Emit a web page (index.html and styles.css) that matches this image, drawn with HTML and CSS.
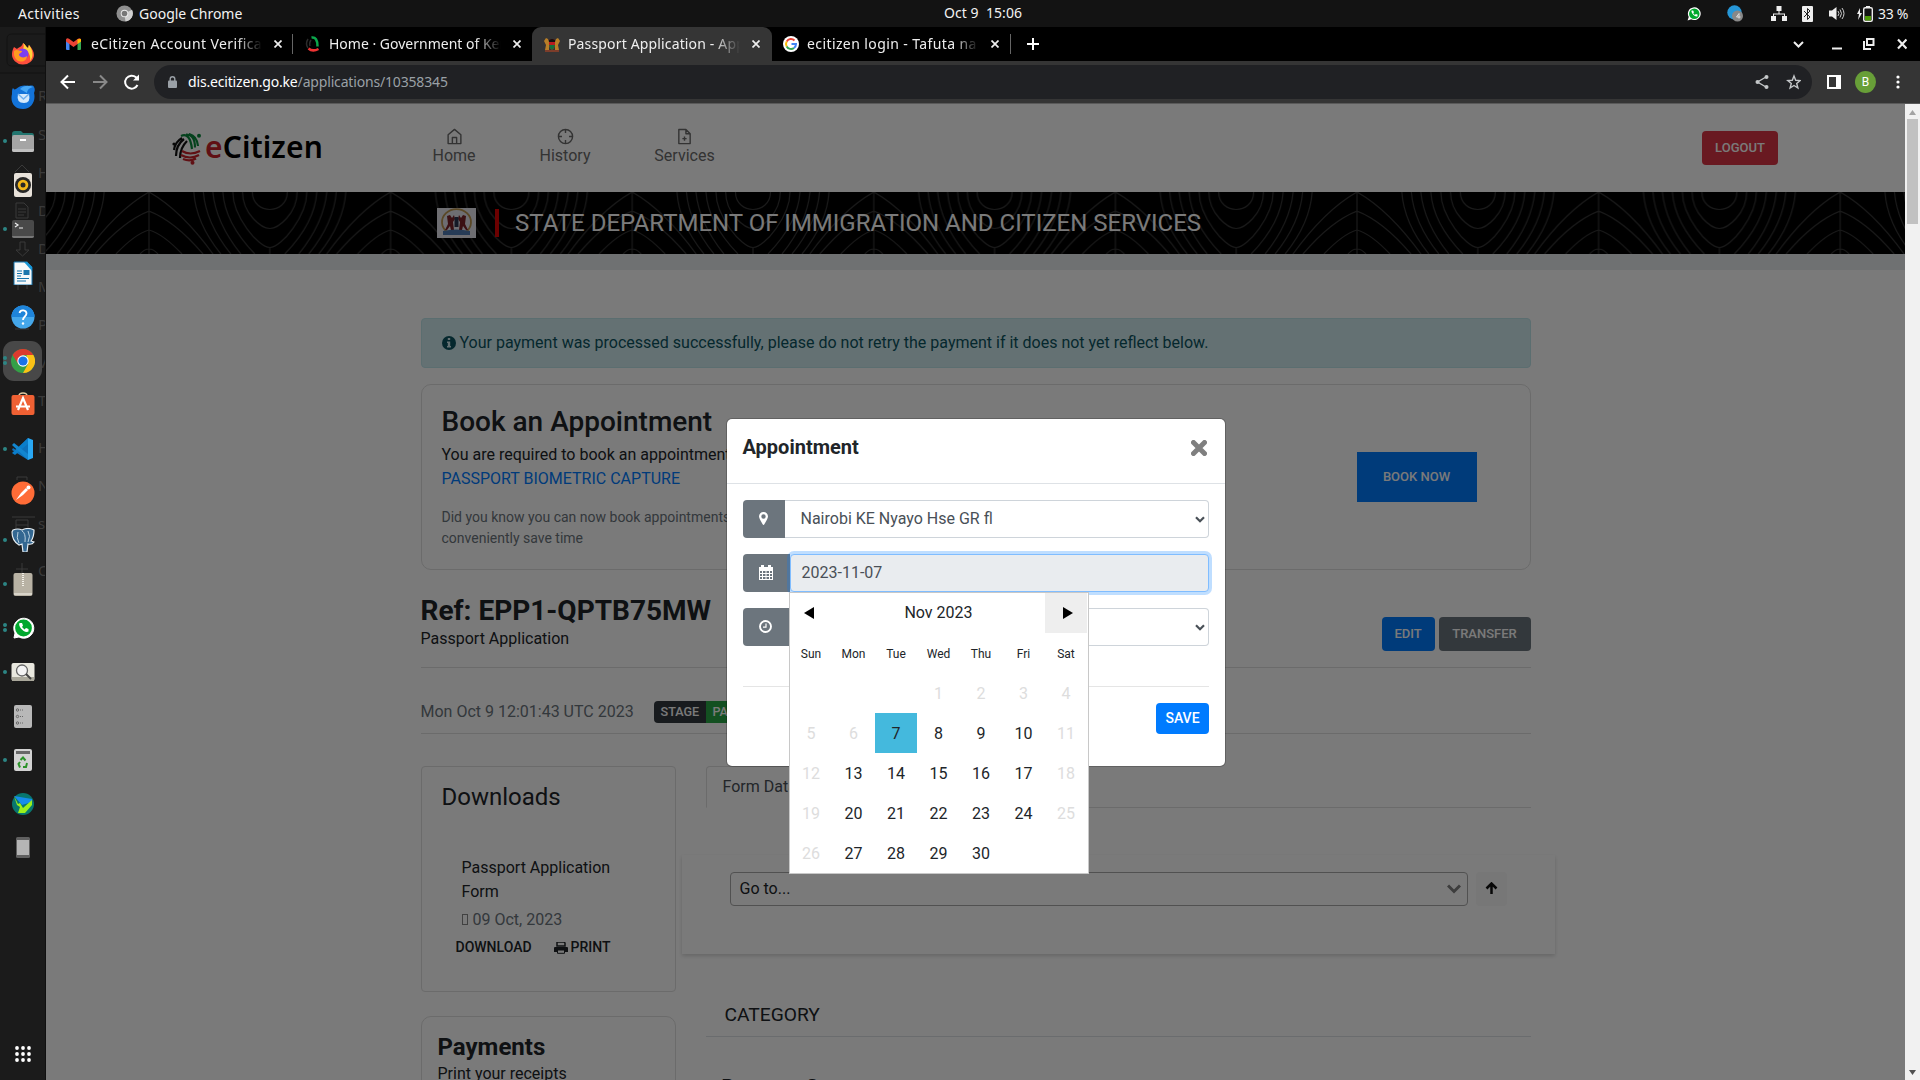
FILE: index.html
```html
<!DOCTYPE html>
<html lang="en">
<head>
<meta charset="utf-8">
<title>Passport Application</title>
<link rel="stylesheet" href="styles.css">
</head>
<body>
<div class="topbar">
  <span class="activities">Activities</span>
  <svg class="app-icon" width="17" height="17" viewBox="0 0 18 18"><circle cx="9" cy="9" r="8.500" fill="#8f8f8f"/><path d="M9 9 17 5a8.500 8.500 0 0 1-7 12.400z" fill="#d0d0d0"/><circle cx="9" cy="9" r="4" fill="#eee"/><circle cx="9" cy="9" r="3" fill="#777"/></svg>
  <span class="app-name">Google Chrome</span>
  <span class="clock">Oct 9&nbsp; 15:06</span>
  <div class="tray">
    <svg width="14" height="14" viewBox="0 0 24 24"><path d="M1 23 3 17a11 11 0 1 1 4 4z" fill="#fff"/><circle cx="12.500" cy="11.500" r="9" fill="#00a82d"/><path d="M8 6c-2 3 5 12 10 10l0-3-3-1-1.500 1.500-3-3L12 9l-1.500-3z" fill="#fff"/></svg>
    <svg class="tray-tg" width="16" height="17" viewBox="0 0 16 17"><circle cx="7.500" cy="7.500" r="7.200" fill="#2697d8"/><circle cx="10.500" cy="11" r="5.500" fill="#888"/><path d="M12 8.500v5M12 8.500l-2.500 3.500h4" stroke="#ddd" fill="none"/></svg>
    <svg class="tray-net" width="16" height="15" viewBox="0 0 16 15"><path d="M5.500 0h5v5h-5zM0 10h5v5H0zM11 10h5v5h-5zM7.500 5h1v3h-1zM2 7.500h12v2.500h-1V8.500H3V10H2z" fill="#eee"/></svg>
    <svg class="tray-bt" width="11" height="16" viewBox="0 0 11 16"><rect width="11" height="16" rx="1" fill="#eee"/><path d="m2 5 6 6-2.500 2.500v-11L8 5l-6 6" fill="none" stroke="#222"/></svg>
    <svg class="tray-vol" width="16" height="15" viewBox="0 0 16 15"><path d="M0 4.500h3L7.500 1v13L3 10.500H0z" fill="#eee"/><path d="M9 5q2 2.500 0 5M11 3.500q3 4 0 8M13 2q4 5.500 0 11" fill="none" stroke="#ccc"/></svg>
    <svg class="tray-bat" width="16" height="16" viewBox="0 0 16 16"><path d="M3 2 0 8h2l-1 6 4-7H3z" fill="#eee"/><rect x="6.700" y="1.700" width="8.600" height="13.600" rx="1.500" fill="none" stroke="#eee" stroke-width="1.400"/><path d="M9 0h4v2H9z" fill="#eee"/><path d="M8 10h6v4.500H8z" fill="#4e9a06"/></svg>
    <span class="battery">33 %</span>
  </div>
</div>
<div class="desktop">
<nav class="dock">
  <div class="ghosts">
    <span style="top:58px">R</span><span style="top:97px">S</span><span style="top:135px">H</span><span style="top:173px">D</span><span style="top:211px">D</span><span style="top:249px">M</span><span style="top:287px">P</span><span style="top:325px">V</span><span style="top:363px">T</span><span style="top:410px">H</span><span style="top:448px">N</span><span style="top:486px">s</span><span style="top:533px">O</span>
    <svg width="46" height="600" viewBox="0 27 46 600" fill="none" stroke="#3a3a3a"><path d="M46 34H12q-5 0-5 5v22q0 5 5 5h34M0 73h46" stroke="#131313"/><path d="M15 172l7-7 7 7M17 203h7l4 4v11H16v-15zM18 209h8M18 212h8M18 215h6M20 242h5v8h4l-6.500 6L16 250h4zM16 262h12M18 290v-7M27 289v-7M15 329h14M12 517h23M16 520h12v15H16zM16 525h12M16 530h12M16 569h12M22 563v12M17 480v-3h10v3"/></svg>
  </div>
  <div class="app"><svg viewBox="0 0 24 24"><path d="M3 6c1 1 2 1 3 2 2-2 5-2 6-6 3 2 3 4 5 5 1-1 0-2 1-3 3 3 5 7 5 10a11 10 0 0 1-22-1c0-3 1-5 2-7z" fill="#ff4f3d"/><path d="M12 2c3 2 3 4 5 5 1-1 0-2 1-3 4 5 5 12 1 16 1-5-1-10-7-12 1-2 1-4 0-6z" fill="#ffd43a"/><circle cx="12" cy="13" r="5.500" fill="#7b3ff2"/><path d="M3 10c3-2 5 0 8 0 0 2-3 2-3 4 1 3 6 3 8 1 0 7-11 8-13-1z" fill="#ff9b20"/></svg></div>
  <div class="app"><svg viewBox="0 0 24 24"><path d="M5 4C9 0 14 0 18 1c3-1 5 0 5 1 1 2 1 3 0 6 2 7-2 16-11 16C3 24-1 17 1 9c0-3 0-5 1-6 1 1 1 2 3 1z" fill="#1373d9"/><path d="M9 4c4-4 9-4 13-2-4 1-6 3-6 6z" fill="#46a7f5"/><path d="M7 9h11q2 9-5 9-8 0-6-9z" fill="#d5e9fb"/><path d="m7 9 5.500 5L18 9" fill="none" stroke="#71b1ee" stroke-width="1.500"/></svg></div>
  <div class="app run"><svg viewBox="0 0 24 24"><path d="M1 5q0-3 3-3h6l2 2h9q2 0 2 3H1z" fill="#22756f"/><rect x="1" y="6" width="22" height="17" rx="2" fill="#a5a5a5"/><path d="M1 20h22v1q0 2-2 2H3q-2 0-2-2z" fill="#c0c0c0"/><path d="M9 10h6v2H9z" fill="#fff"/></svg></div>
  <div class="app"><svg viewBox="0 0 24 24"><rect x="3" y="0" width="18" height="24" rx="2" fill="#e8e2da"/><circle cx="12" cy="12" r="8" fill="#272727"/><circle cx="12" cy="12" r="5.300" fill="#f2b619"/><circle cx="12" cy="12" r="2.500" fill="#272727"/></svg></div>
  <div class="app run"><svg viewBox="0 0 24 24"><rect x="1" y="3" width="22" height="18" rx="2" fill="#494949"/><path d="M1 19h22q0 2-2 2H3q-2 0-2-2z" fill="#777"/><path d="m4 6 3 2-3 2M8 11h4" fill="none" stroke="#eee" stroke-width="1.200"/></svg></div>
  <div class="app"><svg viewBox="0 0 24 24"><path d="M3 1h13l5 5v18H3z" fill="#f6f8f9" stroke="#1473ab"/><path d="M13 1h3l5 5v4z" fill="#1795d4"/><path d="M6 10h5M6 12.500h5M6 15h4M6 17.500h12M6 20h9" stroke="#1473ab"/><path d="M12.500 9h6v5h-6z" fill="#1d77ad"/></svg></div>
  <div class="app"><svg viewBox="0 0 24 24"><circle cx="12" cy="12" r="11.500" fill="#45a7ea"/><path d="M.5 12a11.500 11.500 0 0 1 23 0z" fill="#1e84da"/><path d="M8.500 8c1-4 7-3 7 .5 0 3-3.500 3-3.500 6.500" fill="none" stroke="#fff" stroke-width="1.800"/><circle cx="12" cy="18.500" r="1.200" fill="#fff"/></svg></div>
  <div class="app run2 current"><svg viewBox="0 0 24 24"><circle cx="12" cy="12" r="12" fill="#34a047"/><path d="M1.600 6A12 12 0 0 1 22.400 6H12l-5 8.500z" fill="#dc3a2e"/><path d="M22.400 6a12 12 0 0 1-10.400 18l5-9-1.500-9z" fill="#fbc116"/><circle cx="12" cy="12" r="5.700" fill="#fff"/><circle cx="12" cy="12" r="4.600" fill="#1b73e8"/></svg></div>
  <div class="app software"><svg viewBox="0 0 24 24"><path d="M8 4q0-3 4-3t4 3" fill="none" stroke="#dfc8a0" stroke-width="1.400"/><rect x=".5" y="3" width="23" height="20" rx="2" fill="#ef6033"/><path d="m7 18 5-12 5 12M5 14.500h14" fill="none" stroke="#fff" stroke-width="2.200"/></svg></div>
  <div class="app run"><svg viewBox="0 0 24 24"><path d="m17 1-12 12-3-2-1 2 16 10z" fill="#0d71bb"/><path d="m1 16 3 2L17 7V1z" fill="#0a7dca"/><path d="m17 1 5 2v18l-5 2z" fill="#29a8f4"/><path d="m1 8 2-2 14 11v6z" fill="#1286d0"/></svg></div>
  <div class="app"><svg viewBox="0 0 24 24"><circle cx="12" cy="12" r="11.500" fill="#ff6c37"/><path d="m5 19 5-7 5-5 2 2-5 5z" fill="#fff"/><circle cx="17.500" cy="6.500" r="2" fill="#fff"/></svg></div>
  <div class="app run lower"><svg viewBox="0 0 24 24"><path d="M2 2q5-2 9 0 6-3 12 0 0 7-3 11l3 1q-2 3-6 2l-1 8h-4l-1-8-3 1Q1 13 1 4z" fill="#336791" stroke="#e5edf2" stroke-width="1.200"/><path d="M7 4q-2 6 1 11M11 3q4 2 3 11M17 3q3 5 0 11" fill="none" stroke="#b8d0df"/></svg></div>
  <div class="app run"><svg viewBox="0 0 24 24"><rect x="2.500" y="1" width="19" height="23" rx="2" fill="#b8b2a4"/><path d="M12 1v13" stroke="#f3f0e8" stroke-width="2" stroke-dasharray="1 1"/><path d="M3 22h18" stroke="#d8d4c9" stroke-width="2"/></svg></div>
  <div class="app run2"><svg viewBox="0 0 24 24"><path d="M3 22 4 17a10 10 0 1 1 4 4z" fill="#fff" stroke="#fff"/><circle cx="12.500" cy="12" r="8.400" fill="#00a82d"/><path d="M8.500 7c-2 3 5 11 9 8.500v-2.500l-2.500-1-1.500 1.500-2.500-2.500L12 9.500 11 7z" fill="#fff"/></svg></div>
  <div class="app run"><svg viewBox="0 0 24 24"><rect x=".5" y="3" width="23" height="18" rx="2" fill="#e9e8df"/><path d="M1 17h22v4H1z" fill="#aaa89b"/><circle cx="11" cy="10.500" r="5.500" fill="#f4f4f4" stroke="#666" stroke-width="1.300"/><path d="m15 14 5 5" stroke="#444" stroke-width="2"/></svg></div>
  <div class="app"><svg viewBox="0 0 24 24"><rect x="3" y="1" width="18" height="23" rx="2" fill="#b8b8b8"/><g fill="none" stroke="#666"><circle cx="6.500" cy="6" r="1.200"/><circle cx="6.500" cy="12.500" r="1.200"/><circle cx="6.500" cy="19" r="1.200"/><path d="M9 6h4M9 12.500h4M9 19h4" stroke-dasharray="1 1"/></g></svg></div>
  <div class="app run"><svg viewBox="0 0 24 24"><rect x="3" y="1" width="18" height="22" rx="2" fill="#d3d3d3"/><path d="M5 3h14v3H5z" fill="#686868"/><path d="m9.500 12 2.500-2.500 2.500 3M16 15l-1 4h-3M9 19.500 7.500 16l1.500-2" fill="none" stroke="#2b9329" stroke-width="2"/></svg></div>
  <div class="app"><svg viewBox="0 0 24 24"><circle cx="12" cy="12" r="11" fill="#08776f"/><path d="m3 4 18 3v3l-10 3z" fill="#168dec"/><path d="m3 4 4 8 2-1 3 5 9-8v5l-7 8H7l2-6-3-2z" fill="#9bf01c"/></svg></div>
  <div class="app"><svg viewBox="0 0 24 24"><rect x="5" y="1" width="14" height="21" rx="1.500" fill="#606060"/><path d="M6 4h12v15H6z" fill="#b5b5b5"/></svg></div>
  <div class="app grid-btn"><svg viewBox="0 0 24 24" fill="#fff"><circle cx="6" cy="6" r="1.900"/><circle cx="12" cy="6" r="1.900"/><circle cx="18" cy="6" r="1.900"/><circle cx="6" cy="12" r="1.900"/><circle cx="12" cy="12" r="1.900"/><circle cx="18" cy="12" r="1.900"/><circle cx="6" cy="18" r="1.900"/><circle cx="12" cy="18" r="1.900"/><circle cx="18" cy="18" r="1.900"/></svg></div>
</nav>
<div class="browser">
  <div class="tabs">
    <div class="tab t1"><svg width="15" height="12" viewBox="0 0 15 12"><path d="M0 1.500 3.500 4v8H1q-1 0-1-1z" fill="#4285f4"/><path d="M15 1.500 11.500 4v8H14q1 0 1-1z" fill="#34a853"/><path d="M0 1.500Q1-.5 3 .8L7.500 4 12 .8q2-1.300 3 .7V3.500L7.500 9 0 3.500z" fill="#ea4335"/><path d="M11.500 1.200 15 1v2.500l-3.500 2.600z" fill="#fbbc04"/></svg><span class="title">eCitizen Account Verification</span><svg class="x" width="8" height="8" viewBox="0 0 8 8"><path d="m.5.5 7 7m0-7-7 7"/></svg></div>
    <div class="tab t2"><svg width="16" height="16" viewBox="0 0 16 16" fill="none"><path d="M6.500 1.500q6-1 6 9" stroke="#0ba64b" stroke-width="2.500"/><path d="M3 3q-3 5 0 9M6 4q-2 3-1 6" stroke="#2c2c2c" stroke-width="1.500"/><path d="M3.500 12.500q4 3.500 10 .5" stroke="#e33" stroke-width="2.500"/></svg><span class="title">Home · Government of Kenya</span><svg class="x" width="8" height="8" viewBox="0 0 8 8"><path d="m.5.5 7 7m0-7-7 7"/></svg></div>
    <div class="tab t3 active"><svg width="16" height="15" viewBox="0 0 16 15"><path d="m0 4 2-3 2 1 1 3v8H1l1-5zM16 4l-2-3-2 1-1 3v8h4l-1-5z" fill="#b87e27"/><path d="M5 3q3-2 6 0v6q-1 3-3 4-2-1-3-4z" fill="#b71b20"/><path d="M5 3q3-2 6 0v2H5z" fill="#111"/><path d="M5 8h6q0 3-3 5-3-2-3-5z" fill="#11713a"/><path d="M1 13h14v2H1z" fill="#7c3d2a"/></svg><span class="title">Passport Application - Appointment</span><svg class="x" width="8" height="8" viewBox="0 0 8 8"><path d="m.5.5 7 7m0-7-7 7"/></svg></div>
    <div class="tab t4"><svg width="16" height="16" viewBox="0 0 16 16"><circle cx="8" cy="8" r="8" fill="#fff"/><g fill="none" stroke-width="2"><path d="M11.500 4.500A5 5 0 0 0 3.700 5.500" stroke="#ea4335"/><path d="M3.700 5.500a5 5 0 0 0 0 5" stroke="#fbbc05"/><path d="M3.700 10.500A5 5 0 0 0 11 12" stroke="#34a853"/><path d="M11 12q2-1.500 2-4H8.500" stroke="#4285f4"/></g></svg><span class="title">ecitizen login - Tafuta na Google</span><svg class="x" width="8" height="8" viewBox="0 0 8 8"><path d="m.5.5 7 7m0-7-7 7"/></svg></div>
    <svg class="plus" width="12" height="12" viewBox="0 0 12 12"><path d="M6 0v12M0 6h12" stroke="#fff" stroke-width="2"/></svg>
    <svg class="win" width="114" height="14" viewBox="0 0 114 14" fill="none" stroke="#eee"><path d="m1 5 4.500 4.500L10 5" stroke-width="2"/><path d="M39 11.500h10" stroke-width="2"/><path d="M74 2h6.500v6H74z" stroke-width="2"/><path d="M71 4v8h7" stroke-width="2"/><path d="m105 2.500 8.500 9m0-9-8.500 9" stroke-width="2.200"/></svg>
  </div>
  <div class="toolbar">
    <svg class="navs" width="80" height="18" viewBox="0 0 80 18" fill="none" stroke-width="2"><path d="M15 9H1.500M8 2.500 1.500 9 8 15.500" stroke="#fff"/><path d="M33 9h13.500M40 2.500 46.500 9 40 15.500" stroke="#898989"/><path d="M77.500 12A6.500 6.500 0 1 1 76 4.300L78 6.500" stroke="#fff"/><path d="M79 1.500v6h-6z" fill="#fff" stroke="none"/></svg>
    <div class="omnibox">
      <svg class="lock" width="9" height="12" viewBox="0 0 9 12"><rect y="4.500" width="9" height="7.500" rx="1" fill="#9aa0a6"/><path d="M2.200 5V3q0-2.200 2.300-2.200T6.800 3v2" fill="none" stroke="#9aa0a6" stroke-width="1.400"/></svg>
      <span class="url"><b>dis.ecitizen.go.ke</b>/applications/10358345</span>
      <svg class="omni-icons" width="46" height="16" viewBox="0 0 46 16" fill="none" stroke="#c4c7c9"><path d="M11 3 2.500 8l8.500 5" stroke-width="1.400"/><g fill="#c4c7c9" stroke="none"><circle cx="11.500" cy="3" r="2"/><circle cx="2.500" cy="8" r="2"/><circle cx="11.500" cy="13" r="2"/></g><path d="m39 2 1.700 4.300 4.500.3-3.500 2.900 1.200 4.500-3.900-2.500-3.900 2.500 1.200-4.500-3.500-2.900 4.500-.3z" stroke-width="1.400"/></svg>
    </div>
    <svg class="side" width="14" height="14" viewBox="0 0 14 14"><path d="M1 1h12v12H1z" fill="none" stroke="#fff" stroke-width="2"/><path d="M9 1h4v12H9z" fill="#fff"/></svg>
    <span class="avatar">B</span>
    <svg class="dots" width="4" height="14" viewBox="0 0 4 14" fill="#fff"><circle cx="2" cy="2" r="1.600"/><circle cx="2" cy="7" r="1.600"/><circle cx="2" cy="12" r="1.600"/></svg>
  </div>
  <div class="viewport">
    <main class="page">
      <header class="site-head">
        <div class="logo"><svg width="30" height="32" viewBox="0 0 30 32" fill="none"><path d="M9 3q9-4 11 13M14 1.500q9 0 9 13M17 1q8 2 9 12" stroke="#0b8a3e" stroke-width="2.200"/><path d="M12 6Q4 12 4 23M15 8Q8 15 8 25M10 5q-7 4-8 12" stroke="#111" stroke-width="2.200"/><path d="M10 18q8 5 18 0M9 22q9 5 18 0M11 26q7 3 13-.5" stroke="#c8222a" stroke-width="2.200"/><circle cx="2" cy="11" r="1.600" fill="#111"/><circle cx="27" cy="2.800" r="2" fill="#0b8a3e"/><circle cx="20.500" cy="29.800" r="2" fill="#c8222a"/></svg><span><i>e</i>Citizen</span></div>
        <a class="n1"><svg viewBox="0 0 24 24"><path d="M3 9.500 12 2l9 7.500V22H3zM9 22v-8.500h6V22"/></svg>Home</a>
        <a class="n2"><svg viewBox="0 0 24 24"><circle cx="12" cy="12" r="10"/><path d="M22 12h-5M7 12H2M12 7V2M12 22v-5"/></svg>History</a>
        <a class="n3"><svg viewBox="0 0 24 24"><path d="M14 2H4v20h16V8zM14 2v6h6M12 18v-6M9 15h6"/></svg>Services</a>
        <button class="btn logout">LOGOUT</button>
      </header>
      <div class="banner">
        <svg class="waves" width="1859" height="62"><defs><pattern id="w" x="103" y="0" width="241.600" height="62" patternUnits="userSpaceOnUse"><g fill="none" stroke="#383838" stroke-width="1.200"><g id="peak"><path d="M0 0v62M-64 62Q-32 18 0 0 32 18 64 62M-54 62Q-26 29 0 19 26 29 54 62M-33 62Q-14 42 0 38 14 42 33 62M-9 62Q0 52 9 62"/></g><use href="#peak" x="241.600"/><g transform="translate(120.800)"><path d="M-17.500 0C-17.500 12-8 17.500 0 17.500S17.500 12 17.500 0M-27.300 0C-27.300 22-8 36.500 0 36.500S27.300 22 27.300 0M-37 0C-37 24-12 55 0 55.500 12 55 37 24 37 0M0 55.500V62M-47 0Q-45 31-15 62M47 0Q45 31 15 62M-57 0Q-54 31-29 62M57 0Q54 31 29 62M-66.500 0Q-64 31-39 62M66.500 0Q64 31 39 62M-76 0Q-74 31-49 62M76 0Q74 31 49 62"/></g></g></pattern></defs><rect width="1859" height="62" fill="url(#w)"/></svg>
        <svg class="arms" width="39" height="30" viewBox="0 0 39 30"><path d="M0 0h39v30H0z" fill="#e6e6ee"/><path d="M10 24a14.500 13 0 1 1 19 0" fill="none" stroke="#bd9650" stroke-width="1.800"/><path d="m10 8 3-1 2 3 2-3 1 4-2 3 1 8h-3l-1-4-3 4H8l3-6zM29 8l-3-1-2 3-2-3-1 4 2 3-1 8h3l1-4 3 4h2l-3-6z" fill="#7b2228"/><path d="M17.500 9h4v10h-4z" fill="#2a3550"/><path d="M6 23q13-3 27 0v4H6z" fill="#507cb5"/></svg>
        <span class="redbar"></span>
        <span class="dept">STATE DEPARTMENT OF IMMIGRATION AND CITIZEN SERVICES</span>
      </div>
      <div class="strip"></div>
      <div class="container">
        <div class="alert"><svg width="14" height="14" viewBox="0 0 14 14"><circle cx="7" cy="7" r="7" fill="#0c5460"/><path d="M5.800 2h2.400v2H5.800zM5 5.500h3.200V10H9v1.500H5V10h.8V7H5z" fill="#d1ecf1"/></svg> Your payment was processed successfully, please do not retry the payment if it does not yet reflect below.</div>
        <section class="book">
          <div><h3>Book an Appointment</h3><p>You are required to book an appointment for</p><p class="link">PASSPORT BIOMETRIC CAPTURE</p><p class="hint">Did you know you can now book appointments<br>conveniently save time</p></div>
          <button class="btn booknow">BOOK NOW</button>
        </section>
        <section class="ref">
          <div><h3>Ref: EPP1-QPTB75MW</h3><p>Passport Application</p></div>
          <div class="actions"><button class="btn edit">EDIT</button><button class="btn gray">TRANSFER</button></div>
        </section>
        <section class="stage"><span class="date">Mon Oct 9 12:01:43 UTC 2023</span><span class="badge">STAGE</span><span class="badge green">PAID</span></section>
        <div class="cols">
          <aside>
            <section class="downloads"><h4>Downloads</h4><div class="file">Passport Application<br>Form</div><div class="filedate"><i class="tofu"></i> 09 Oct, 2023</div><div class="links"><span>DOWNLOAD</span><span class="print"><svg width="14" height="12" viewBox="0 0 14 12"><path d="M3 0h7l1 1v3H3z" fill="none" stroke="#212529" stroke-width="1.500"/><path d="M1 5h12q1 0 1 1v4H0V6q0-1 1-1z" fill="#212529"/><path d="M3.500 8h7v3.300h-7z" fill="#fff" stroke="#212529"/></svg>PRINT</span></div></section>
            <section class="payments"><h4>Payments</h4><p>Print your receipts</p></section>
          </aside>
          <div class="detail">
            <div class="formtabs"><span>Form Data</span></div>
            <div class="goto"><div class="select">Go to...<svg width="14" height="10" viewBox="0 0 14 10"><path d="m1 1.500 6 6 6-6" fill="none" stroke="#808080" stroke-width="3"/></svg></div><div class="up"><svg width="13" height="12" viewBox="0 0 13 12"><path d="M6.500 12V2M1.500 6.500l5-5 5 5" fill="none" stroke="#111" stroke-width="2.500"/></svg></div></div>
            <h5>CATEGORY</h5>
            <h4 class="paysum">Payment Summary</h4>
          </div>
        </div>
      </div>
      <div class="backdrop"></div>
    </main>
    <div class="scrollbar"><svg width="7" height="5"><path d="m0 5 3.500-5L7 5z" fill="#a3a3a3"/></svg><i></i><svg class="down" width="7" height="5"><path d="m0 0 3.500 5L7 0z" fill="#505050"/></svg></div>
    <div class="modal">
      <div class="modal-head"><h5>Appointment</h5><svg width="16" height="16" viewBox="0 0 16 16"><path d="m2.500 2.500 11 11m0-11-11 11" stroke="#7f7f7f" stroke-width="5" stroke-linecap="round"/></svg></div>
      <div class="modal-body">
        <div class="group g1"><span class="pre"><svg width="9" height="13" viewBox="0 0 9 13"><path fill-rule="evenodd" d="M4.500 0A4.400 4.400 0 0 1 9 4.400Q9 6 5.500 12q-1 1.800-2 0Q0 6 0 4.400A4.400 4.400 0 0 1 4.500 0zm0 2.300a2.200 2.200 0 1 0 0 4.400 2.200 2.200 0 0 0 0-4.400z" fill="#fff"/></svg></span><span class="field">Nairobi KE Nyayo Hse GR fl<svg width="10" height="7" viewBox="0 0 10 7"><path d="m1 1.200 4 4 4-4" fill="none" stroke="#495057" stroke-width="2.200"/></svg></span></div>
        <div class="group g2"><span class="pre"><svg width="14" height="15" viewBox="0 0 14 15"><path fill-rule="evenodd" d="M0 2h2V0h3v2h4V0h3v2h2v13H0zm1 4v2h2V6zm3 0v2h2.500V6zm3.500 0v2H10V6zM11 6v2h2V6zM1 9v2h2V9zm3 0v2h2.500V9zm3.500 0v2H10V9zM11 9v2h2V9zM1 12v2h2v-2zm3 0v2h2.500v-2zm3.500 0v2H10v-2zm3.500 0v2h2v-2z" fill="#fff"/></svg></span><span class="field focus">2023-11-07</span></div>
        <div class="group g3"><span class="pre"><svg width="13" height="13" viewBox="0 0 13 13" fill="none" stroke="#fff"><circle cx="6.500" cy="6.500" r="5.500" stroke-width="1.900"/><path d="M7 3.500v3.700H4" stroke-width="1.200"/></svg></span><span class="field"><svg width="10" height="7" viewBox="0 0 10 7"><path d="m1 1.200 4 4 4-4" fill="none" stroke="#495057" stroke-width="2.200"/></svg></span></div>
        <div class="modal-foot"><button class="btn save">SAVE</button></div>
      </div>
      <div class="picker">
        <div class="phead"><span><svg width="10" height="12"><path d="M10 0v12L0 6z"/></svg></span><strong>Nov 2023</strong><span class="next"><svg width="10" height="12"><path d="M0 0v12l10-6z"/></svg></span></div>
        <div class="week"><span>Sun</span><span>Mon</span><span>Tue</span><span>Wed</span><span>Thu</span><span>Fri</span><span>Sat</span></div>
        <div class="days"><span></span><span></span><span></span><span class="off">1</span><span class="off">2</span><span class="off">3</span><span class="off">4</span><span class="off">5</span><span class="off">6</span><span class="sel">7</span><span>8</span><span>9</span><span>10</span><span class="off">11</span><span class="off">12</span><span>13</span><span>14</span><span>15</span><span>16</span><span>17</span><span class="off">18</span><span class="off">19</span><span>20</span><span>21</span><span>22</span><span>23</span><span>24</span><span class="off">25</span><span class="off">26</span><span>27</span><span>28</span><span>29</span><span>30</span></div>
      </div>
    </div>
  </div>
</div>
</div>
</body>
</html>
```
FILE: styles.css
```css
* { box-sizing: border-box; }
body { margin: 0; width: 1920px; height: 1080px; overflow: hidden; display: flex; flex-direction: column; background: #000; font: 16px/24px Roboto, sans-serif; color: #212529; }
h3, h4, h5, p { margin: 0; font-weight: 500; }
p { font-weight: 400; }
svg { flex: none; }

/* system bar */
.topbar { height: 27px; background: #131313; display: flex; align-items: center; position: relative; padding: 0 13px 0 18px; font: 14px/27px "Noto Sans", sans-serif; color: #f2f2f2; }
.activities { width: 98px; letter-spacing: .35px; }
.app-name { margin-left: 6px; }
.clock { position: absolute; left: 944px; top: -1px; letter-spacing: .05px; }
.tray { margin-left: auto; display: flex; align-items: center; }
.tray-tg { margin-left: 26px; }
.tray-net { margin-left: 28px; }
.tray-bt { margin-left: 15px; }
.tray-vol { margin-left: 16px; }
.tray-bat { margin-left: 12px; }
.battery { margin-left: 5px; width: 29px; white-space: nowrap; letter-spacing: -.3px; }

/* dock */
.desktop { flex: 1; display: flex; min-height: 0; }
.dock { width: 46px; background: #1b1b1b; border-right: 1px solid #101010; display: flex; flex-direction: column; padding: 4px 0; position: relative; overflow: hidden; }
.ghosts { position: absolute; inset: 0; color: #3a3a3a; font: 15px/20px "Noto Sans", sans-serif; }
.ghosts span { position: absolute; left: 38px; }
.app { height: 44px; flex: none; display: flex; align-items: center; justify-content: center; position: relative; }
.app svg { width: 24px; height: 24px; position: relative; }
.run::before, .run2::before { content: ""; position: absolute; z-index: 1; left: 3px; top: 20px; width: 4px; height: 4px; border-radius: 50%; background: #2c8584; }
.run2::before { top: 17px; box-shadow: 0 5px #2c8584; }
.current { margin: 2px 3px; height: 40px; border-radius: 11px; background: #484848; }
.current::before { left: 0; top: 15px; }
.software { padding-bottom: 2px; }
.lower { margin-top: 3px; }
.grid-btn { margin-top: auto; height: 44px; }

/* browser frame */
.browser { flex: 1; display: flex; flex-direction: column; min-width: 0; }
.tabs { height: 34px; display: flex; background: #000; position: relative; }
.tab { display: flex; align-items: center; height: 34px; padding: 0 11px 0 14px; font: 14px/34px "Noto Sans", sans-serif; color: #eee; position: relative; }
.tab .title { flex: 1; width: 0; margin: 0 12px 0 8px; white-space: nowrap; overflow: hidden; -webkit-mask-image: linear-gradient(90deg, #000 85%, transparent); mask-image: linear-gradient(90deg, #000 85%, transparent); }
.tab .x path { stroke: #eee; stroke-width: 1.7; fill: none; }
.t1 { width: 247px; padding-left: 20px; padding-right: 11px; border-right: 0; }
.t1 .title { margin-left: 10px; letter-spacing: .4px; }
.t1::after, .t4::after { content: ""; position: absolute; right: 0; top: 7px; width: 1px; height: 20px; background: #666; }
.t2 { width: 239px; padding-left: 12px; }
.t3 { width: 240px; padding-left: 12px; padding-right: 12px; }
.t3 .title { letter-spacing: .15px; }
.t3.active { background: #353535; border-radius: 9px 9px 0 0; }
.t4 { width: 239px; padding-left: 11px; padding-right: 12px; }
.t4 .title { letter-spacing: .4px; }
.plus { margin: 11px 0 0 16px; }
.win { position: absolute; right: 13px; top: 10px; }
.toolbar { height: 43px; background: #353535; border-bottom: 1px solid #5a5a5a; display: flex; align-items: center; padding: 0 20px 0 14px; }
.navs { margin-right: 14px; }
.omnibox { flex: none; width: 1658px; height: 34px; border-radius: 17px; background: #202124; display: flex; align-items: center; padding: 0 11px 0 14px; }
.url { margin-left: 11px; color: #9aa0a6; font: 14px/34px "Noto Sans", sans-serif; letter-spacing: -.17px; }
.url b { font-weight: 400; color: #fff; }
.omni-icons { margin-left: auto; }
.side { margin-left: 15px; }
.avatar { margin-left: 14px; width: 22px; height: 22px; border-radius: 50%; background: #689f38; color: #fff; font-size: 12px; line-height: 22px; text-align: center; }
.dots { margin-left: 20px; }

/* page */
.viewport { flex: 1; display: flex; min-height: 0; position: relative; }
.page { width: 1859px; background: #fff; overflow: hidden; position: relative; display: flex; flex-direction: column; }
.backdrop { position: absolute; inset: 0; background: rgba(0, 0, 0, .52); }
.site-head { height: 88px; flex: none; padding: 0 127px 2px 126px; display: flex; align-items: center; }
.logo { display: flex; align-items: center; width: 222px; font: 600 30px/32px "Noto Sans", sans-serif; color: #000; letter-spacing: .1px; margin-top: 3px; }
.logo i { font-style: normal; color: #c8222a; }
.logo span { margin: -3px 0 0 3px; }
.site-head a { display: flex; flex-direction: column; align-items: center; color: #6b6b6b; line-height: 20px; }
.site-head a svg { width: 17px; height: 17px; margin-bottom: 1px; fill: none; stroke: #6b6b6b; stroke-width: 2; stroke-linejoin: round; }
.n1 { width: 120px; }
.n2 { width: 102px; }
.n3 { width: 137px; }
.btn { border: 0; font: 500 13px/20px Roboto, sans-serif; color: #fff; background: #007bff; border-radius: 4px; padding: 7px 13px; height: 34px; white-space: nowrap; }
.logout { margin: 2px 0 0 auto; background: #dc3545; width: 76px; padding: 7px 0; }
.banner { height: 62px; flex: none; background: #000; display: flex; align-items: center; padding-left: 391px; position: relative; }
.waves { position: absolute; left: 0; top: 0; }
.arms, .redbar, .dept { position: relative; }
.redbar { width: 4px; height: 28px; background: #e00000; margin: 0 16px 0 19px; }
.dept { color: #fff; font-size: 24px; line-height: 30px; white-space: nowrap; }
.strip { height: 16px; flex: none; background: #e9ecef; }
.container { width: 1110px; margin: 48px auto 0; flex: none; }
.alert { height: 50px; padding: 12px 20px; border: 1px solid #bee5eb; border-radius: 4px; background: #d1ecf1; color: #0c5460; display: flex; align-items: center; gap: 4px; white-space: nowrap; }
.book { margin-top: 16px; height: 186px; border: 1px solid #dfdfdf; border-radius: 10px; padding: 20px; display: flex; justify-content: space-between; position: relative; }
.book h3 { font-size: 28px; line-height: 34px; margin-bottom: 4px; }
.link { color: #007bff; }
.hint { margin-top: 16px; font-size: 14px; line-height: 21px; color: #6c757d; }
.booknow { width: 120px; height: 50px; border-radius: 0; margin: 47px 33px 0 0; }
.ref { height: 98px; border-bottom: 1px solid #dfdfdf; padding-top: 24px; display: flex; justify-content: space-between; }
.ref h3 { font-size: 28px; line-height: 33px; font-weight: 700; }
.actions { display: flex; gap: 4px; padding-top: 23px; }
.edit { width: 53px; }
.actions .gray { background: #6c757d; width: 92px; padding: 7px 0; }
.stage { height: 66px; border-bottom: 1px solid #dfdfdf; padding-top: 23px; display: flex; align-items: center; }
.date { color: #6c757d; width: 233px; }
.badge { height: 22px; background: #343a40; color: #fff; border-radius: 4px 0 0 4px; font-size: 12.6px; font-weight: 500; line-height: 22px; width: 52px; padding-left: 7px; }
.badge.green { background: #28a745; border-radius: 0 4px 4px 0; }
.cols { margin-top: 32px; display: flex; gap: 30px; }
aside { width: 255px; flex: none; }
h4 { font-size: 24px; line-height: 29px; }
.downloads { height: 226px; border: 1px solid #dfdfdf; border-radius: 4px; padding: 16px 20px; }
.downloads h4 { font-weight: 400; }
.file { margin: 44px 0 0 20px; }
.filedate { margin: 4px 0 0 20px; color: #6c757d; }
.tofu { display: inline-block; width: 6px; height: 11px; border: 1px solid #888; margin-right: 1px; }
.links { margin: 3px 0 0 14px; display: flex; gap: 22px; font-size: 14px; font-weight: 500; }
.print svg { vertical-align: -2px; margin-right: 3px; }
.payments { margin-top: 24px; height: 200px; border: 1px solid #dfdfdf; border-radius: 10px; padding: 16px; }
.payments h4, .paysum { font-weight: 700; }
.payments p { line-height: 24px; }
.detail { width: 825px; }
.formtabs { height: 42px; border-bottom: 1px solid #dfdfdf; }
.formtabs span { display: block; width: 110px; height: 42px; border: 1px solid #dfdfdf; border-bottom-color: #fff; border-radius: 4px 4px 0 0; padding: 8px 16px; color: #495057; background: #fff; }
.goto { width: 873px; height: 99px; margin: 47px 0 0 -24px; padding: 17px 48px; box-shadow: 0 2px 4px rgba(0, 0, 0, .16); display: flex; gap: 8px; }
.select { width: 738px; height: 34px; border: 1px solid #aaa; border-radius: 4px; display: flex; justify-content: space-between; align-items: center; padding: 0 6px 0 9px; }
.up { width: 31px; height: 34px; border-radius: 4px; background: #f8f8f8; display: flex; align-items: center; justify-content: center; padding-bottom: 2px; }
.detail h5 { height: 83px; border-bottom: 1px solid #dee2e6; padding: 50px 0 0 19px; font-size: 19.2px; line-height: 22px; font-weight: 400; }
.paysum { margin: 36px 0 0 16px; font-size: 20px; }

.scrollbar { width: 15px; background: #f1f1f1; display: flex; flex-direction: column; align-items: center; padding: 6px 0 5px; }
.scrollbar i { width: 11px; height: 105px; background: #c1c1c1; margin-top: 4px; }
.scrollbar .down { margin-top: auto; }

/* dialog */
.modal { position: absolute; left: 681px; top: 315px; width: 498px; height: 347px; background: #fff; background-clip: padding-box; border-radius: 5px; box-shadow: 0 0 0 1px rgba(0, 0, 0, .2); }
.modal-head { height: 65px; border-bottom: 1px solid #dee2e6; padding: 16px 18px 0 15.5px; display: flex; justify-content: space-between; }
.modal-head h5 { font-size: 20px; font-weight: 700; line-height: 24px; }
.modal-head svg { margin-top: 5px; }
.modal-body { padding: 16px; display: flex; flex-direction: column; gap: 16px; }
.group { height: 38px; display: flex; }
.pre { width: 47px; background: #6c757d; border-radius: 4px 0 0 4px; display: flex; align-items: center; justify-content: center; padding: 0 2px 2px 0; }
.g1 .pre { width: 42px; }
.field { flex: 1; border: 1px solid #ced4da; border-left: 0; border-radius: 0 4px 4px 0; padding: 0 3px 0 12px; color: #495057; display: flex; align-items: center; justify-content: space-between; }
.g1 .field { padding-left: 15.5px; }
.g3 .field { justify-content: flex-end; }
.focus { background: #e9ecef; border: 1px solid #80bdff; border-radius: 4px; padding-left: 10.5px; box-shadow: 0 0 0 3px rgba(0, 123, 255, .25); }
.modal-foot { margin-top: 24px; border-top: 1px solid #e5e5e5; padding-top: 16px; display: flex; justify-content: flex-end; }
.save { font-size: 14px; height: 31px; width: 53px; padding: 4px 0 6px; }
.picker { position: absolute; left: 62px; top: 173px; width: 300px; height: 282px; background: #fff; border: 1px solid #c8c8c8; }
.phead { height: 40px; display: flex; justify-content: space-between; line-height: 40px; }
.phead span { width: 42px; display: flex; align-items: center; justify-content: center; padding-right: 4px; }
.phead .next { background: #eee; margin-right: 1px; padding: 0 0 0 4px; }
.phead strong { font-weight: 400; }
.week, .days { display: grid; grid-template-columns: repeat(7, 42.5px); text-align: center; }
.week { font-size: 12px; line-height: 42px; height: 40px; }
.week span { width: 42px; }
.days span { height: 40px; line-height: 41px; width: 42px; }
.days .off { color: #ddd; }
.days .sel { background: #44b9dd; }
```
